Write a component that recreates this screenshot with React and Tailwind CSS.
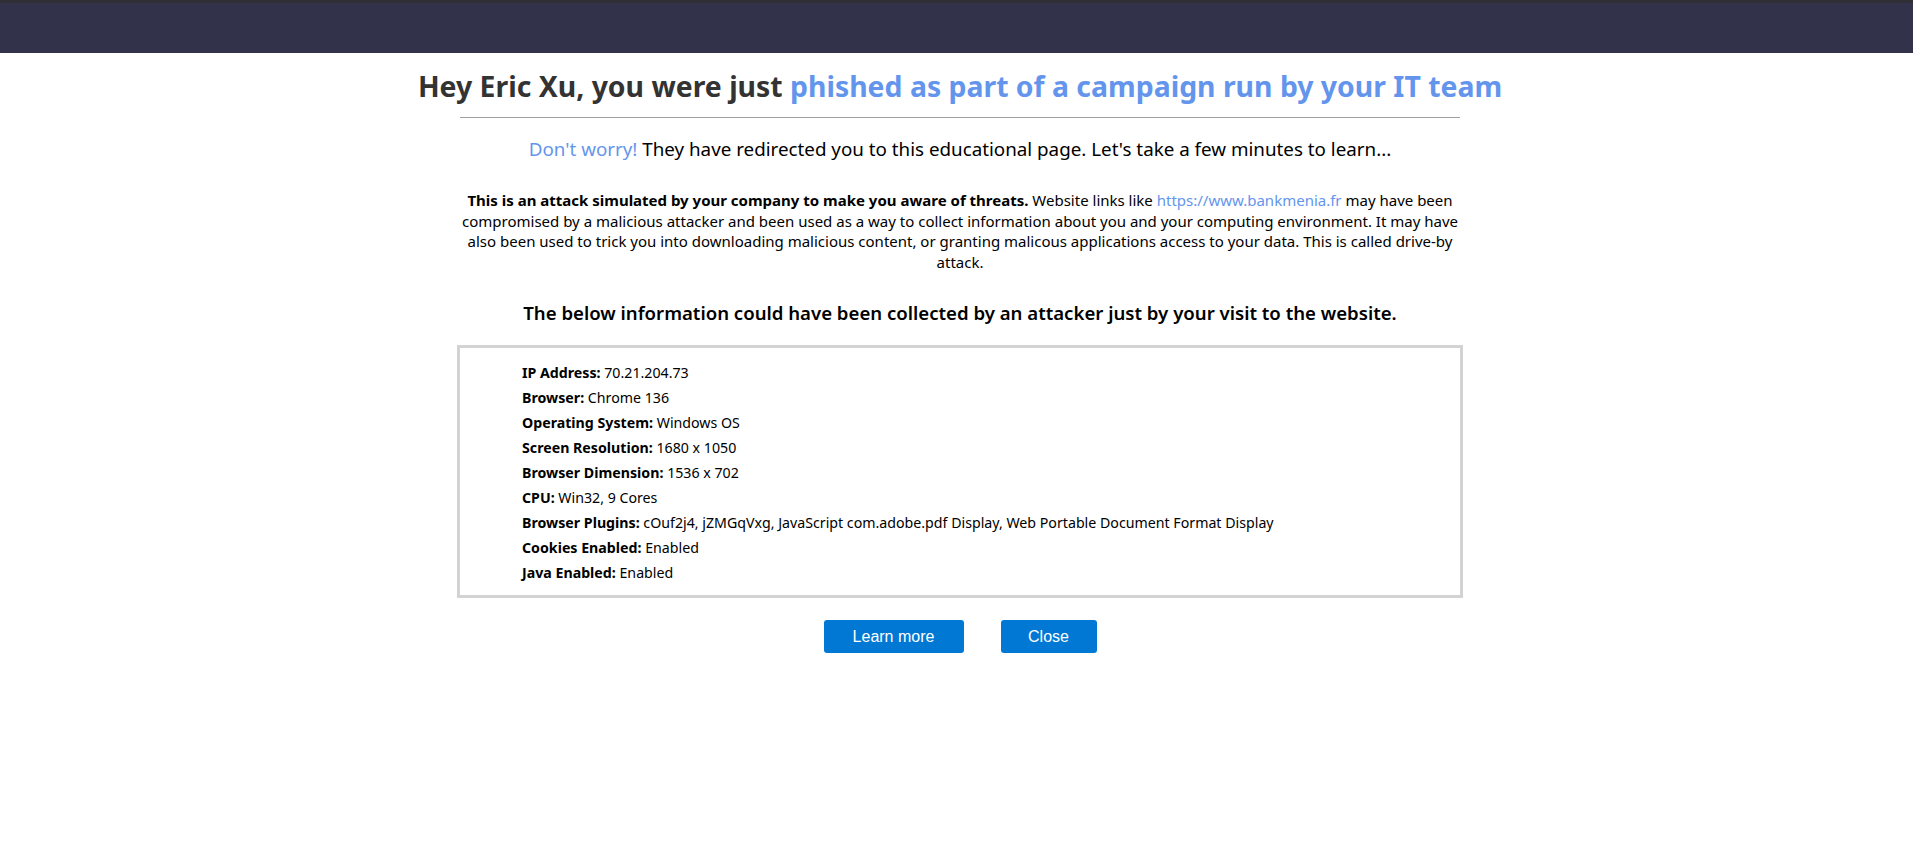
import React from "react";

const rows = [
  ["IP Address:", "70.21.204.73"],
  ["Browser:", "Chrome 136"],
  ["Operating System:", "Windows OS"],
  ["Screen Resolution:", "1680 x 1050"],
  ["Browser Dimension:", "1536 x 702"],
  ["CPU:", "Win32, 9 Cores"],
  ["Browser Plugins:", "cOuf2j4, jZMGqVxg, JavaScript com.adobe.pdf Display, Web Portable Document Format Display"],
  ["Cookies Enabled:", "Enabled"],
  ["Java Enabled:", "Enabled"],
];

export default function App() {
  return (
    <div className="min-h-screen bg-white font-['Noto_Sans','Open_Sans',sans-serif] text-black">
      <header className="h-[53px] bg-[#32334a] border-t-[3px] border-[#2f2f35]" />
      <div className="flex justify-center pl-[7px]">
        <main className="w-[1006px] text-center">
          <h1 className="mt-[16px] flex justify-center whitespace-nowrap text-[28.4px] leading-[34px] font-bold text-[#333]">
            <span>
              Hey Eric Xu, you were just{" "}
              <span className="text-[#6495ed]">phished as part of a campaign run by your IT team</span>
            </span>
          </h1>
          <hr className="mx-[3px] mt-[14px] border-0 border-t border-[#a0a0a0]" />
          <p className="mt-[19px] text-[18.8px] leading-[25px]">
            <span className="text-[#6495ed]">Don't worry!</span> They have redirected you to this educational page. Let's take a few minutes to learn...
          </p>
          <p className="mx-[3px] mt-[28px] text-[15px] leading-[20.5px]">
            <b>This is an attack simulated by your company to make you aware of threats.</b> Website links like{" "}
            <a className="text-[#6495ed]">https://www.bankmenia.fr</a> may have been compromised by a malicious attacker and been used as a way to collect information about you and your computing environment. It may have also been used to trick you into downloading malicious content, or granting malicous applications access to your data. This is called drive-by attack.
          </p>
          <h2 className="mt-[28px] text-[18.6px] leading-[25px] font-semibold">
            The below information could have been collected by an attacker just by your visit to the website.
          </h2>
          <div className="mt-[20px] border-[3px] border-[#d3d3d3] text-left pl-[62px] pt-[12px] pb-[10px] text-[14.2px] leading-[25px]">
            {rows.map(([k, v]) => (
              <div key={k}>
                <b>{k}</b> {v}
              </div>
            ))}
          </div>
          <div className="mt-[22px] flex justify-center gap-[37px] font-['Liberation_Sans',Arial,sans-serif]">
            <button className="h-[33px] w-[140px] rounded-[3px] bg-[#0078d4] text-white text-[16px]">Learn more</button>
            <button className="h-[33px] w-[96px] rounded-[3px] bg-[#0078d4] text-white text-[16px]">Close</button>
          </div>
        </main>
      </div>
    </div>
  );
}
